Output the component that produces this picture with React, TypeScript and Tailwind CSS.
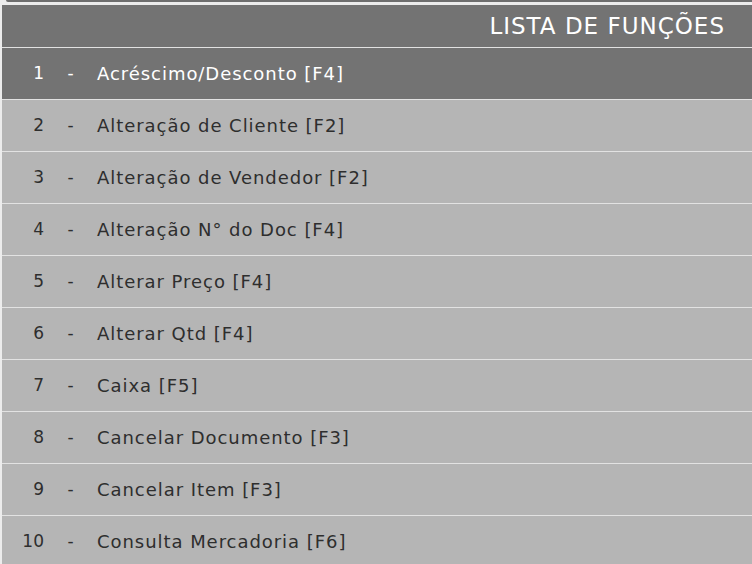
import React from "react";

const items = [
  "Acréscimo/Desconto [F4]",
  "Alteração de Cliente [F2]",
  "Alteração de Vendedor [F2]",
  "Alteração N° do Doc [F4]",
  "Alterar Preço [F4]",
  "Alterar Qtd [F4]",
  "Caixa [F5]",
  "Cancelar Documento [F3]",
  "Cancelar Item [F3]",
  "Consulta Mercadoria [F6]",
];

export default function App() {
  return (
    <div
      className="w-[752px] h-[564px] overflow-hidden bg-[#ececec] flex flex-col"
      style={{ fontFamily: '"DejaVu Sans", sans-serif' }}
    >
      <div className="h-[2px] ml-[6px] bg-[#6e6e6e] rounded-bl-[3px] shrink-0" />
      <div className="h-[3px] shrink-0" />
      <div className="ml-[2px] flex flex-col">
        <div className="h-[42px] bg-[#737373] flex items-center justify-end pr-[27px] shrink-0">
          <span className="text-white text-[23px] font-medium tracking-[1px]">LISTA DE FUNÇÕES</span>
        </div>
        {items.map((label, i) => {
          const active = i === 0;
          return (
            <div
              key={i}
              className={
                "h-[52px] border-t border-[#e2e2e2] flex items-center shrink-0 " +
                (active ? "bg-[#737373] text-white" : "bg-[#b5b5b5] text-[#2e2e2e]")
              }
            >
              <span className="w-[42px] text-right text-[17px]">{i + 1}</span>
              <span className="w-[53px] text-center text-[17px]">-</span>
              <span className="text-[18px] tracking-[0.95px]">{label}</span>
            </div>
          );
        })}
      </div>
    </div>
  );
}
